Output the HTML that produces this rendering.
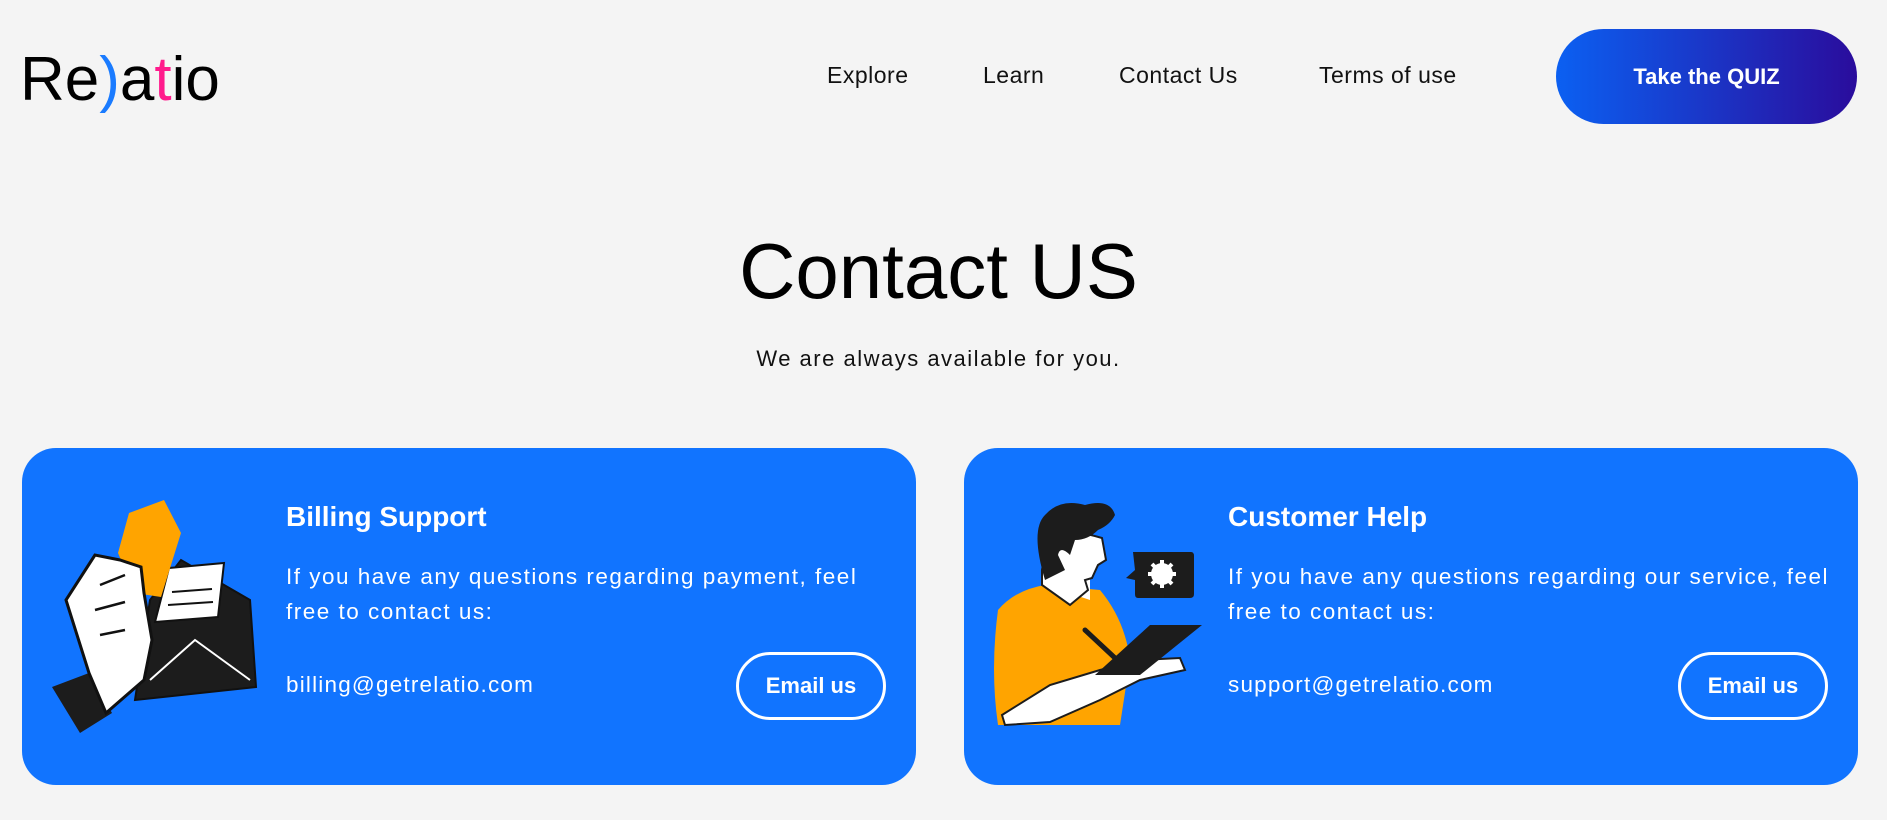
<!DOCTYPE html>
<html><head><meta charset="utf-8"><style>
*{margin:0;padding:0;box-sizing:border-box}
body{width:1887px;height:820px;background:#f4f4f4;font-family:"Liberation Sans",sans-serif;color:#111;position:relative;overflow:hidden}
.logo{position:absolute;left:20px;top:44px;font-size:62px;letter-spacing:0px;color:#000;font-weight:400}
.nav a{position:absolute;top:62px;font-size:23px;color:#111;text-decoration:none;letter-spacing:0.5px}
.quiz{position:absolute;left:1556px;top:29px;width:301px;height:95px;border-radius:48px;background:linear-gradient(90deg,#0b60f2,#2a0c9c);color:#fff;font-weight:700;font-size:22px;display:flex;align-items:center;justify-content:center}
h1{position:absolute;left:0;width:1877px;text-align:center;top:226px;font-size:78px;font-weight:400;color:#000}
.sub{position:absolute;left:0;width:1877px;text-align:center;top:346px;font-size:22px;color:#111;letter-spacing:1.5px}
.card{position:absolute;top:448px;width:894px;height:337px;background:#1174ff;border-radius:34px;color:#fff}
.card h3{position:absolute;left:264px;top:53px;font-size:28px;font-weight:700}
.card p{position:absolute;left:264px;top:111px;font-size:22.5px;line-height:35px;letter-spacing:1.5px;white-space:nowrap}
.card .em{position:absolute;left:264px;top:224px;font-size:22.5px;letter-spacing:1.2px}
.card .btn{position:absolute;left:714px;top:204px;width:150px;height:68px;border:3px solid #fff;border-radius:34px;font-weight:700;font-size:22px;display:flex;align-items:center;justify-content:center}
</style></head><body>
<div class="logo">Re<span style="color:#1a7bff">)</span>a<span style="color:#ff1a8c">t</span>io</div>
<div class="nav"><a style="left:827px">Explore</a><a style="left:983px">Learn</a><a style="left:1119px">Contact Us</a><a style="left:1319px">Terms of use</a></div>
<div class="quiz">Take the QUIZ</div>
<h1>Contact US</h1>
<div class="sub">We are always available for you.</div>

<div class="card" style="left:22px">
<svg style="position:absolute;left:0;top:0" width="894" height="337" viewBox="22 448 894 337">
<path d="M135,700 L256,687 L250,600 L181,560 L150,600 Z" fill="#1c1c1c" stroke="#111" stroke-width="2"/>
<path d="M169,568 L224,563 L218,617 L155,622 Z" fill="#fff" stroke="#111" stroke-width="2"/>
<path d="M172,592 l40,-3 M168,605 l45,-3" stroke="#111" stroke-width="2"/>
<path d="M150,680 L195,640 L250,680" stroke="#fff" stroke-width="2" fill="none"/>
<path d="M164,500 L181,533 L161,597 L135,593 L118,553 L129,513 Z" fill="#ffa400"/>
<path d="M52,687 L80,733 L112,713 L89,673 Z" fill="#1c1c1c"/>
<path d="M95,555 L66,600 L89,673 L106,713 L144,680 L152,640 L144,593 L141,567 L120,560 Z" fill="#fff" stroke="#111" stroke-width="3"/>
<path d="M100,585 l25,-10 M95,610 l30,-8 M100,635 l25,-5" stroke="#111" stroke-width="2.5"/>
</svg>
<h3>Billing Support</h3>
<p>If you have any questions regarding payment, feel<br>free to contact us:</p>
<div class="em">billing@getrelatio.com</div>
<div class="btn">Email us</div>
</div>

<div class="card" style="left:964px">
<svg style="position:absolute;left:26px;top:42px" width="220" height="240" viewBox="0 0 220 240">
<path d="M8,120 Q25,100 55,95 L110,100 Q135,130 140,170 L130,235 L8,235 Q0,180 8,120 Z" fill="#ffa400"/>
<path d="M55,95 L100,110 L100,85 Z" fill="#fff"/>
<path d="M52,80 L60,40 Q85,40 112,48 L116,70 L108,75 L102,88 L95,90 L98,100 L80,115 L52,95 Z" fill="#fff" stroke="#1c1c1c" stroke-width="2"/>
<path d="M55,90 Q40,40 55,25 Q70,8 95,15 Q120,8 125,25 Q120,35 108,40 Q98,50 85,50 L80,65 Q70,55 68,65 L75,80 Z" fill="#1c1c1c"/>
<path d="M143,62 L201,62 Q204,62 204,66 L204,104 Q204,108 200,108 L148,108 Q145,108 145,104 L145,90 L136,88 L145,80 Z" fill="#1c1c1c"/>
<circle cx="172" cy="84" r="11" fill="#fff"/><circle cx="172" cy="84" r="5" fill="#1c1c1c"/>
<path d="M172,70v28M158,84h28M162,74l20,20M182,74l-20,20" stroke="#fff" stroke-width="4"/>
<path d="M12,225 L60,195 L110,180 L150,170 L190,168 L195,180 L150,190 L110,210 L60,232 L15,235 Z" fill="#fff" stroke="#1c1c1c" stroke-width="2"/>
<path d="M105,185 L160,135 L212,135 L150,185 Z" fill="#1c1c1c"/>
<path d="M95,140 L125,168" stroke="#1c1c1c" stroke-width="5" stroke-linecap="round"/>
</svg>
<h3>Customer Help</h3>
<p>If you have any questions regarding our service, feel<br>free to contact us:</p>
<div class="em">support@getrelatio.com</div>
<div class="btn">Email us</div>
</div>
</body></html>
